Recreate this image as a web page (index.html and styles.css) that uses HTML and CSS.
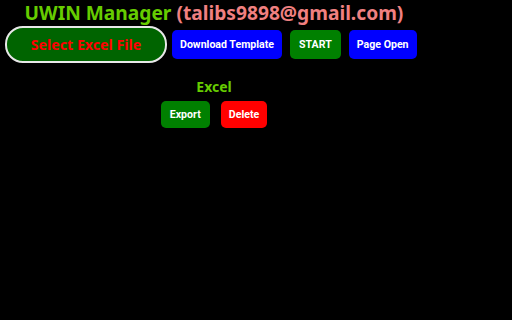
FILE: index.html
```html
<!DOCTYPE html>
<html lang="en">
<head>
    <meta charset="UTF-8">
    <title>UWIN Manager</title>
    <link rel="stylesheet" href="styles.css">
</head>
<body>
    <div class="popup">
        <h1 class="title">UWIN Manager <span class="mail">(talibs9898@gmail.com)</span></h1>
        <div class="toolbar">
            <button class="file-btn" type="button">Select Excel File</button>
            <button class="btn blue" type="button">Download Template</button>
            <button class="btn green start" type="button">START</button>
            <button class="btn blue" type="button">Page Open</button>
        </div>
        <h2 class="section">Excel</h2>
        <div class="actions">
            <button class="btn green small export" type="button">Export</button>
            <button class="btn red small" type="button">Delete</button>
        </div>
    </div>
</body>
</html>
```

FILE: styles.css
```css
body {
    margin: 0;
    background-color: #000;
    font-family: "Noto Sans", "Open Sans", sans-serif;
}
.popup {
    width: 418px;
    padding-left: 5px;
    display: flex;
    flex-direction: column;
    align-items: center;
}
.title {
    margin: 0;
    font-size: 19.2px;
    line-height: 26px;
    color: #66cc00;
    font-weight: bold;
}
.mail {
    color: #f08080;
}
.toolbar {
    align-self: flex-start;
    display: flex;
    align-items: center;
    gap: 8px;
}
.file-btn {
    width: 162px;
    height: 37px;
    margin-right: -3px;
    background-color: #006400;
    color: #ff0000;
    border: 2px solid #e8e8e8;
    border-radius: 18px;
    font-family: inherit;
    font-size: 14.2px;
    font-weight: bold;
}
.btn {
    height: 29px;
    padding: 0 8px;
    border: none;
    border-radius: 5px;
    color: #fff;
    font-family: Roboto, "Noto Sans", sans-serif;
    font-size: 10.6px;
    font-weight: bold;
    white-space: nowrap;
}
.start {
    padding: 0 9px;
}
.blue {
    background-color: #0000ff;
}
.green {
    background-color: #008000;
}
.red {
    background-color: #ff0000;
}
.section {
    margin: 14px 0 4px;
    font-size: 14px;
    line-height: 20px;
    color: #66cc00;
}
.actions {
    display: flex;
    gap: 11px;
}
.small {
    height: 27px;
}
.export {
    padding: 0 9px;
}
```
